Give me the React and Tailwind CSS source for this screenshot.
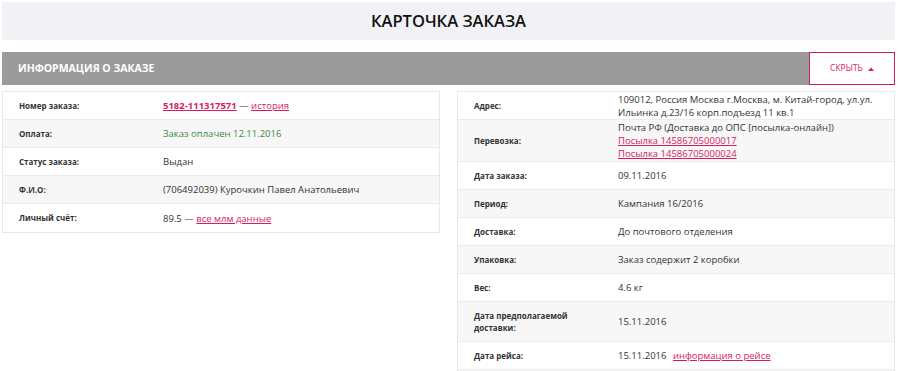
import { useState } from "react";

const leftRows = [
  {
    label: "Номер заказа:",
    value: (
      <>
        <a href="#" className="font-bold text-[#d81b60] underline">
          5182-111317571
        </a>{" "}
        — <a href="#" className="text-[#d81b60] underline">история</a>
      </>
    ),
  },
  {
    label: "Оплата:",
    value: <span className="text-[#3a8a3a]">Заказ оплачен 12.11.2016</span>,
  },
  { label: "Статус заказа:", value: "Выдан" },
  { label: "Ф.И.О:", value: "(706492039) Курочкин Павел Анатольевич" },
  {
    label: "Личный счёт:",
    value: (
      <>
        89.5 — <a href="#" className="text-[#d81b60] underline">все млм данные</a>
      </>
    ),
  },
];

const rightRows = [
  {
    label: "Адрес:",
    value: "109012, Россия Москва г.Москва, м. Китай-город, ул.ул. Ильинка д.23/16 корп.подъезд 11 кв.1",
  },
  {
    label: "Перевозка:",
    pad: "py-[1px]",
    value: (
      <>
        <div>Почта РФ (Доставка до ОПС [посылка-онлайн])</div>
        <a href="#" className="block w-fit text-[#d81b60] underline">Посылка 14586705000017</a>
        <a href="#" className="block w-fit text-[#d81b60] underline">Посылка 14586705000024</a>
      </>
    ),
  },
  { label: "Дата заказа:", value: "09.11.2016" },
  { label: "Период:", value: "Кампания 16/2016" },
  { label: "Доставка:", value: "До почтового отделения" },
  { label: "Упаковка:", value: "Заказ содержит 2 коробки" },
  { label: "Вес:", value: "4.6 кг" },
  { label: "Дата предполагаемой доставки:", value: "15.11.2016", tall: true },
  {
    label: "Дата рейса:",
    value: (
      <>
        15.11.2016{" "}
        <a href="#" className="ml-1 text-[#d81b60] underline">информация о рейсе</a>
      </>
    ),
  },
  { label: "", value: "" },
];

function InfoTable({ rows }) {
  return (
    <div className="border border-[#e8e8e8] bg-white">
      {rows.map((row, i) => (
        <div
          key={i}
          className={`flex items-center border-b border-[#ebebeb] last:border-b-0 ${
            i % 2 === 1 ? "bg-[#f7f7f7]" : "bg-white"
          } ${row.tall ? "min-h-[40px]" : "min-h-[28px]"}`}
        >
          <div className="w-[160px] shrink-0 pl-4 pr-6 text-[8px] font-bold leading-[12px] text-[#333]">
            {row.label}
          </div>
          <div className={`flex-1 pr-4 text-[9.5px] leading-[13px] text-[#333] ${row.pad || ""}`}>
            {row.value}
          </div>
        </div>
      ))}
    </div>
  );
}

export default function App() {
  const [open, setOpen] = useState(true);

  return (
    <div className="min-h-[371px] bg-white px-[2px] pt-[2px] font-['Open_Sans',sans-serif]">
      <div className="mr-[3px] flex h-[38px] items-center justify-center bg-[#f2f2f6]">
        <h1 className="text-[16.5px] font-semibold text-[#111]">КАРТОЧКА ЗАКАЗА</h1>
      </div>

      <div className="mt-[12px] mr-[3px] flex h-[33px] items-center justify-between bg-[#9b9b9b]">
        <span className="pl-4 text-[10.5px] font-bold text-white">ИНФОРМАЦИЯ О ЗАКАЗЕ</span>
        <button
          onClick={() => setOpen(!open)}
          className="flex h-full w-[86px] items-center justify-center gap-[5px] border border-[#cf1b5c] bg-white text-[8.5px] text-[#d81b60]"
        >
          СКРЫТЬ
          <svg width="6" height="4" viewBox="0 0 6 4">
            <path d="M0 4 L3 0.5 L6 4 Z" fill="#d81b60" />
          </svg>
        </button>
      </div>

      {open && (
        <div className="mt-[6px] mr-[3px] grid grid-cols-2 gap-[17px]">
          <div>
            <InfoTable rows={leftRows} />
          </div>
          <div>
            <InfoTable rows={rightRows} />
          </div>
        </div>
      )}
    </div>
  );
}
